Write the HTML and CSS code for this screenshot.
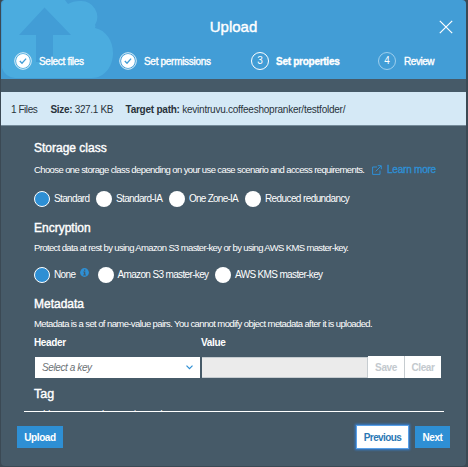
FILE: index.html
```html
<!DOCTYPE html>
<html lang="en">
<head>
<meta charset="utf-8">
<title>Upload</title>
<link rel="stylesheet" href="styles.css">
</head>
<body>
<main class="dialog">
  <header class="head">
    <svg class="cloud" width="115" height="79" viewBox="0 0 115 79" aria-hidden="true">
      <path fill="#4bacdf" d="M3 0H64L67 4Q72 1 79 1A16 16 0 0 1 94 25Q95 26 94 28C105 30 112 41 112 53C112 67 103 78 91 78H14Q4 77 1 68V6Q1 2 3 0Z"/>
      <path fill="#429dd6" d="M43.500 7.500L70 35H52V62H35V35H18Z"/>
    </svg>
    <h1 class="title">Upload</h1>
    <svg class="close" width="14" height="14" viewBox="0 0 14 14" aria-label="Close"><path d="M.8.8l12.400 12.400M13.200.8L.8 13.200" stroke="#fff" stroke-width="1.200" fill="none"/></svg>
    <ol class="steps">
      <li class="step s1"><svg width="18" height="18" viewBox="0 0 18 18"><circle cx="9" cy="9" r="8.300" fill="none" stroke="#d8edf9" stroke-width="1"/><circle cx="9" cy="9" r="6.900" fill="#fff"/><path d="M5.800 9l2.200 2.300 4.100-4.700" fill="none" stroke="#429dd6" stroke-width="1.300"/></svg><span>Select files</span></li>
      <li class="step s2"><svg width="18" height="18" viewBox="0 0 18 18"><circle cx="9" cy="9" r="8.300" fill="none" stroke="#d8edf9" stroke-width="1"/><circle cx="9" cy="9" r="6.900" fill="#fff"/><path d="M5.800 9l2.200 2.300 4.100-4.700" fill="none" stroke="#429dd6" stroke-width="1.300"/></svg><span>Set permissions</span></li>
      <li class="step s3"><i class="num">3</i><span>Set properties</span></li>
      <li class="step s4"><i class="num">4</i><span>Review</span></li>
    </ol>
  </header>
  <div class="info"><span class="files">1 Files</span><span class="size"><b>Size:</b> 327.1 KB</span><span class="path"><b>Target path:</b> kevintruvu.coffeeshopranker/testfolder/</span></div>
  <div class="body">
    <section class="storage">
      <h2>Storage class</h2>
      <p><span class="d1">Choose one storage class depending on your use case scenario and access requirements.</span>
        <a class="learn"><svg width="10" height="10" viewBox="0 0 10 10"><path d="M5 2H.6v7.400H8V5.500M3.700 6.300L9 1M5.800.7h3.500v3.500" fill="none" stroke="#2e8fd4"/></svg><span>Learn more</span></a></p>
      <div class="radios">
        <label class="r1"><i class="radio on"></i><span>Standard</span></label>
        <label class="r2"><i class="radio"></i><span>Standard-IA</span></label>
        <label class="r3"><i class="radio"></i><span>One Zone-IA</span></label>
        <label class="r4"><i class="radio"></i><span>Reduced redundancy</span></label>
      </div>
    </section>
    <section class="encryption">
      <h2>Encryption</h2>
      <p><span class="d2">Protect data at rest by using Amazon S3 master-key or by using AWS KMS master-key.</span></p>
      <div class="radios">
        <label class="e1"><i class="radio on"></i><span>None</span><svg class="tip" width="9" height="9" viewBox="0 0 9 9"><circle cx="4.500" cy="4.500" r="4.400" fill="#2e8fd4"/><path d="M4 1.500h1.300v1.200H4zM3.300 3.500h2v3h.6v.9H3.200v-.9h.7V4.400h-.6z" fill="#465a68"/></svg></label>
        <label class="e2"><i class="radio"></i><span>Amazon S3 master-key</span></label>
        <label class="e3"><i class="radio"></i><span>AWS KMS master-key</span></label>
      </div>
    </section>
    <section class="metadata">
      <h2>Metadata</h2>
      <p><span class="d3">Metadata is a set of name-value pairs. You cannot modify object metadata after it is uploaded.</span></p>
      <div class="labels"><b>Header</b><b>Value</b></div>
      <div class="fields">
        <div class="select"><span>Select a key</span><svg width="7" height="5" viewBox="0 0 7 5"><path d="M.5.7l3 3 3-3" fill="none" stroke="#2e8fd4" stroke-width="1.200"/></svg></div>
        <div class="value"></div>
        <button class="save">Save</button><button class="clear">Clear</button>
      </div>
    </section>
    <section class="tag">
      <h2>Tag</h2>
      <p><span class="d4">Add tags to search, organize and manage access</span></p>
    </section>
  </div>
  <footer class="foot">
    <button class="btn upload">Upload</button>
    <button class="btn previous">Previous</button>
    <button class="btn next">Next</button>
  </footer>
</main>
</body>
</html>
```
FILE: styles.css
```css
* { box-sizing: border-box; }
body { margin: 0; width: 468px; height: 467px; overflow: hidden; background: #3b4954; padding: 0 2px 1px 1px; font-family: "Liberation Sans", Arial, sans-serif; font-size: 10px; color: #fff; }
h1, h2, p, ol { margin: 0; padding: 0; font-weight: 400; }
span, b { white-space: nowrap; }
i { font-style: normal; }
button { border: 0; padding: 0; font-family: inherit; font-weight: 700; letter-spacing: -.4px; }
svg { display: block; flex: none; }
.dialog { height: 466px; display: flex; flex-direction: column; background: #465a68; border-radius: 4px; overflow: hidden; }
.head { position: relative; height: 79px; background: #429dd6; }
.cloud { position: absolute; left: 0; top: 0; }
.title { position: relative; padding-top: 17px; text-align: center; font-size: 15px; line-height: 19px; -webkit-text-stroke: .4px #fff; }
.close { position: absolute; right: 13px; top: 20px; }
.steps { position: relative; list-style: none; display: grid; grid-template-columns: 105px 132px 127px auto; padding: 16px 0 0 13px; }
.step { display: flex; align-items: center; height: 18px; font-size: 10px; letter-spacing: -.3px; -webkit-text-stroke: .35px #fff; }
.step span { margin-left: 7px; }
.num { width: 18px; height: 18px; border: 1.500px solid #fff; border-radius: 50%; text-align: center; line-height: 16px; font-size: 10px; letter-spacing: 0; -webkit-text-stroke: 0; flex: none; }
.s3 { font-weight: 700; letter-spacing: -.27px; }
.s3 .num { font-weight: 400; }
.s4 { letter-spacing: -.45px; }
.s4 span { margin-left: 8px; }
.s4 .num { border: 1px solid #9dcfee; }
.info { margin-top: 13px; height: 34px; flex: none; display: flex; align-items: center; background: #d5e9f6; border-bottom: 1px solid #758b9a; padding: 1px 0 0 10px; color: #29333b; }
.files { width: 39.500px; letter-spacing: -.45px; }
.size { width: 75px; letter-spacing: -.33px; }
.path { letter-spacing: -.235px; }
.body { height: 286px; margin: 0 22px 0 23px; padding: 14px 0 0 10px; border-bottom: 1px solid #fff; overflow: hidden; flex: none; }
section { height: 80px; }
h2 { font-size: 12px; line-height: 16px; -webkit-text-stroke: .4px #fff; }
p { display: flex; align-items: center; font-size: 9.500px; line-height: 12px; margin-top: 8px; }
.d1 { letter-spacing: -.605px; width: 330px; }
.d2 { letter-spacing: -.635px; }
.d3 { letter-spacing: -.6px; }
.d4 { letter-spacing: -.35px; }
.learn { display: flex; align-items: center; gap: 5px; margin-left: 8px; color: #2e8fd4; font-size: 10px; letter-spacing: -.22px; -webkit-text-stroke: .35px #2e8fd4; }
.radios { display: flex; margin-top: 14px; }
.radios label { display: flex; align-items: center; font-size: 10px; height: 17px; letter-spacing: -.65px; flex: none; }
.radio { width: 16px; height: 16px; border-radius: 50%; background: #fff; flex: none; margin-right: 4px; }
.radio.on { background: #2e8fd4; border: 1.500px solid #fff; }
.r1 { width: 62px; } .r2 { width: 73px; } .r3 { width: 76px; }
.radios .r3 { letter-spacing: -.75px; }
.radios .r4 { letter-spacing: -.6px; }
.encryption { height: 76px; }
.encryption p, .metadata p, .tag p { margin-top: 6px; }
.encryption .radios { margin-top: 12px; }
.e1 { width: 63.500px; } .e2 { width: 117.500px; }
.tip { margin: -4px 0 0 5px; }
.metadata { height: 90px; }
.labels { display: grid; grid-template-columns: 167px auto; margin-top: 7px; line-height: 12px; letter-spacing: -.35px; }
.fields { display: flex; margin: 7px 0 0 1px; height: 22px; align-items: center; }
.select { width: 165px; height: 21px; background: #fff; color: #6c7276; font-style: italic; letter-spacing: -.4px; display: flex; align-items: center; justify-content: space-between; padding: 0 7px; }
.value { width: 166px; height: 21px; margin-left: 2px; background: #ebebeb; border: 1px solid #c6ccd0; border-left: 0; }
.save, .clear { height: 22px; background: #fff; color: #c3c9ce; font-size: 10px; }
.save { width: 36px; margin-left: 0; }
.clear { width: 37px; margin-left: 0; border-left: 1px solid #c6ccd0; }
.tag h2 { font-size: 12.500px; }
.foot { display: flex; padding: 14px 16px 0 16px; align-items: flex-start; }
.btn { height: 22px; background: #2e8fd4; color: #fff; font-size: 10px; }
.upload { width: 46px; }
.previous { width: 51px; background: #fff; color: #2b78b5; letter-spacing: -.6px; margin-left: auto; margin-right: 7px; box-shadow: 0 0 0 1px #59a1e8, 0 0 2px 2px #347ccd; }
.next { width: 35px; }
```
